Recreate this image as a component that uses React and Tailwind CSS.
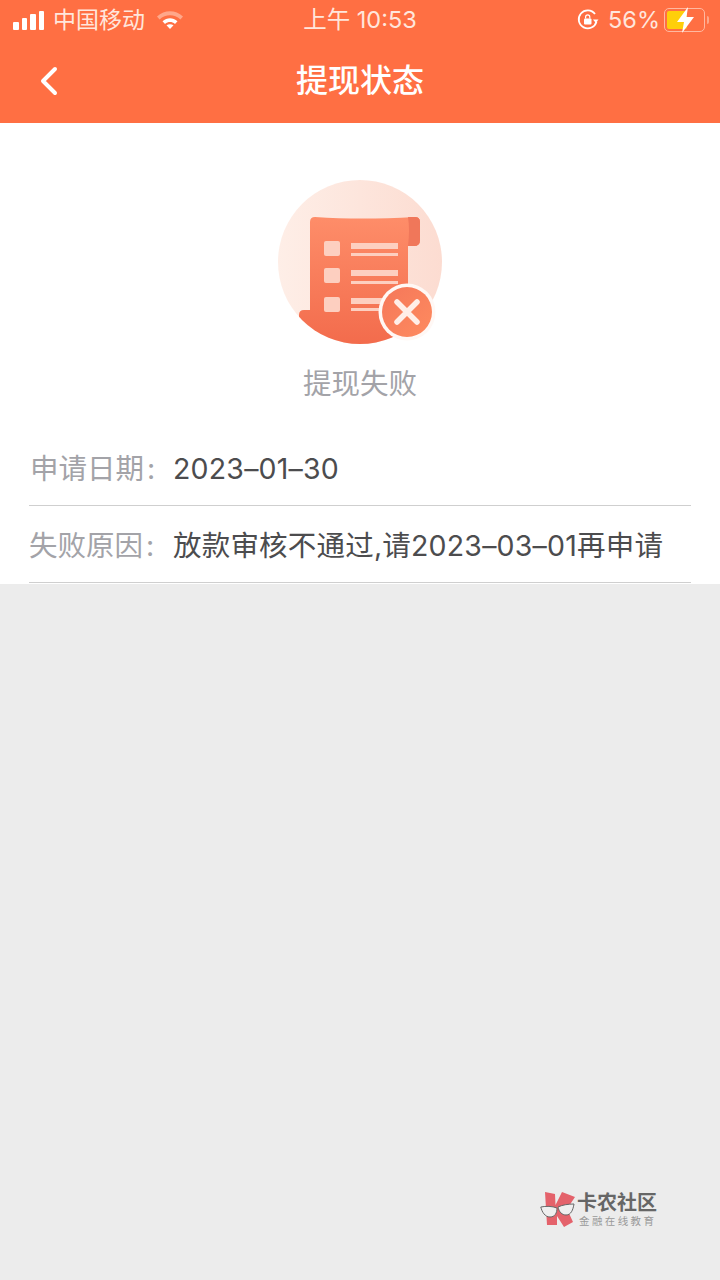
import React from 'react';
import { ChevronLeft } from 'lucide-react';

const font = { fontFamily: 'Inter, "Noto Sans CJK SC", sans-serif' };

function Signal() {
  return (
    <div className="flex items-end gap-[3px] h-[19px]">
      <div className="w-[5.5px] h-[8px] rounded-[1px] bg-white" />
      <div className="w-[5.5px] h-[12px] rounded-[1px] bg-white" />
      <div className="w-[5.5px] h-[16px] rounded-[1px] bg-white" />
      <div className="w-[5.5px] h-[19px] rounded-[1px] bg-white" />
    </div>
  );
}

function Wifi() {
  return (
    <svg width="28" height="22" viewBox="0 0 28 22">
      <path d="M1 7.5C8.5 .5 19.5 .5 27 7.5L24.4 10.4C18.4 5 9.6 5 3.6 10.4Z" fill="#ffa78a" />
      <path d="M6.5 12.2C11 8.3 17 8.3 21.5 12.2L19 15C15.8 12.4 12.2 12.4 9 15Z" fill="#fff" />
      <path d="M10.5 16.2C12.6 14.8 15.4 14.8 17.5 16.2L14 20Z" fill="#fff" />
    </svg>
  );
}

function RotationLock() {
  return (
    <svg width="22" height="22" viewBox="0 0 22 22" fill="none">
      <path d="M19.5 12.5A9 9 0 1 1 18 5" stroke="#fff" strokeWidth="1.8" />
      <path d="M16 10.5h5.5l-2.7 3.4Z" fill="#fff" />
      <rect x="7" y="9.5" width="7.5" height="6" rx="1" fill="#fff" />
      <path d="M8.6 9.5V8a2.1 2.1 0 0 1 4.2 0v1.5" stroke="#fff" strokeWidth="1.2" />
    </svg>
  );
}

function Battery() {
  return (
    <div className="relative flex items-center w-[46px] h-[24px]">
      <div className="w-[41px] h-[24px] rounded-[5px] border border-[#ffb8a0] p-[2px]">
        <div className="w-[20px] h-full rounded-[2px] bg-[#ffcf0a]" />
      </div>
      <div className="ml-[2px] w-[2px] h-[8px] rounded-r bg-[#ffa78a]" />
      <svg className="absolute left-[11px] top-[-2px]" width="22" height="28" viewBox="0 0 22 28">
        <path d="M13 1 2 16h7l-2 11 12-16h-7.5Z" fill="#fff" />
      </svg>
    </div>
  );
}

function ScrollIcon() {
  return (
    <svg width="166" height="166" viewBox="0 0 166 166">
      <defs>
        <linearGradient id="disc" x1="0" y1="0.5" x2="1" y2="0.5">
          <stop offset="0" stopColor="#feeee7" />
          <stop offset="1" stopColor="#fcdcd1" />
        </linearGradient>
        <linearGradient id="paper" x1="0.5" y1="0" x2="0.5" y2="1">
          <stop offset="0" stopColor="#fe8d69" />
          <stop offset="1" stopColor="#f26a4b" />
        </linearGradient>
        <linearGradient id="badge" x1="0" y1="0" x2="1" y2="1">
          <stop offset="0" stopColor="#f5775a" />
          <stop offset="1" stopColor="#fe8b5f" />
        </linearGradient>
        <clipPath id="discClip">
          <circle cx="83" cy="82" r="82" />
        </clipPath>
      </defs>
      <circle cx="83" cy="82" r="82" fill="url(#disc)" />
      <g clipPath="url(#discClip)">
        <path d="M33 42Q33 37 38 37C70 39 100 39 138 37Q143 37 143 42V60Q143 66 137 66H131V170H22V135Q22 130 27 130H33Z" fill="url(#paper)" />
        <path d="M131 37H138Q143 37 143 42V60Q143 66 137 66H131Q133 50 131 37Z" fill="#f0775a" />
      </g>
      <rect x="47" y="61" width="16" height="15" rx="2" fill="#fdcfc0" />
      <rect x="47" y="88" width="16" height="15" rx="2" fill="#fdcfc0" />
      <rect x="47" y="117" width="16" height="15" rx="2" fill="#fdcfc0" />
      <rect x="74" y="63" width="47" height="6" fill="#fdcfc0" />
      <rect x="74" y="73" width="47" height="3" fill="#fdcfc0" />
      <rect x="74" y="90" width="47" height="6" fill="#fdcfc0" />
      <rect x="74" y="101" width="47" height="3" fill="#fdcfc0" />
      <rect x="74" y="118" width="40" height="6" fill="#fdcfc0" />
      <rect x="74" y="128" width="40" height="3" fill="#fdcfc0" />
      <circle cx="130" cy="132" r="28.5" fill="#fff8f5" />
      <circle cx="130" cy="132" r="25" fill="url(#badge)" />
      <path d="M120 122 140 142M140 122 120 142" stroke="#ffeee8" strokeWidth="5.5" strokeLinecap="round" />
    </svg>
  );
}

function LogoMark() {
  return (
    <svg width="36" height="36" viewBox="0 0 36 36">
      <path d="M5 0 15 2 15.500 13 22 0 35 5 27 17 33 30 24 35 17 24 17 33 7 33Z" fill="#e4626b" />
      <path d="M0.800 15C6 14 12 14 17 16 17 21 15 25 10 25 5 25 2 20 0.800 15Z" fill="#efefef" stroke="#666" strokeWidth="1" />
      <path d="M18 15C22 13 28 12 34 12 33 18 31 23 26 23 22 23 19 20 18 15Z" fill="#efefef" stroke="#666" strokeWidth="1" />
    </svg>
  );
}

function Row({ label, value, labelClass = '' }) {
  return (
    <div className="flex items-center h-[77px] pt-[5px] border-b border-[#cfcfcf] text-[28.5px] leading-none whitespace-nowrap">
      <span className={`w-[144px] text-[#a3a3a8] ${labelClass}`}>
        {label}
        <span className="ml-[3px]">:</span>
      </span>
      <span className="text-[#4c4c4e] tracking-[0.2px]">{value}</span>
    </div>
  );
}

export default function App() {
  return (
    <div className="relative w-[720px] h-[1280px] bg-[#ececec] overflow-hidden" style={font}>
      <div className="h-[123px] bg-[#ff6f43] text-white">
        <div className="relative flex items-center justify-between h-[40px] pl-[13px] pr-[10px] text-[#ffe6dc]">
          <div className="flex items-center">
            <Signal />
            <span className="ml-[9px] mr-[11px] text-[23px] leading-none">中国移动</span>
            <Wifi />
          </div>
          <span className="absolute left-0 right-0 text-center text-[23.500px] leading-none">上午 10:53</span>
          <div className="flex items-center">
            <RotationLock />
            <span className="ml-[9px] mr-[4px] text-[23.500px] leading-none">56%</span>
            <Battery />
          </div>
        </div>
        <div className="relative flex items-center justify-center h-[80px] pt-[2px]">
          <ChevronLeft className="absolute left-[25px] top-[17px]" size={48} strokeWidth={2} />
          <h1 className="text-[32px] font-medium leading-none">提现状态</h1>
        </div>
      </div>

      <div className="h-[461px] bg-white flex flex-col items-center pt-[57px]">
        <ScrollIcon />
        <div className="mt-[24px] text-[28.5px] leading-none text-[#a3a3a8]">提现失败</div>
        <div className="self-stretch mx-[29px] mt-[30px]">
          <Row label="申请日期" value="2023–01–30" labelClass="pl-[1px]" />
          <Row label="失败原因" value="放款审核不通过,请2023–03–01再申请" />
        </div>
      </div>

      <div className="absolute left-[540px] top-[1192px] flex items-center">
        <LogoMark />
        <div className="ml-[1px] flex flex-col items-start">
          <span className="text-[20px] leading-none font-bold text-[#666666]">卡农社区</span>
          <span className="mt-[4px] ml-[2px] text-[10.5px] tracking-[2.4px] leading-none text-[#9a9a9a]">金融在线教育</span>
        </div>
      </div>
    </div>
  );
}
